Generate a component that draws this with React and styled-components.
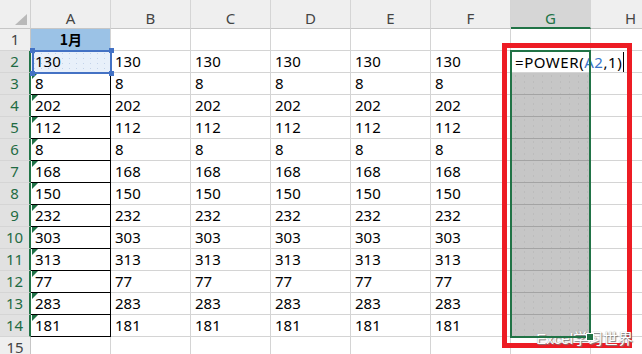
import React from "react";
import styled, { createGlobalStyle, css } from "styled-components";

const Global = createGlobalStyle`
  html, body { margin: 0; padding: 0; background: #fff; overflow: hidden; }
  body { width: 642px; height: 354px; }
`;

const gridTemplate = css`
  display: grid;
  grid-template-columns: 31px repeat(8, 80px);
  grid-template-rows: 29px repeat(15, 22px);
`;

/* Two layers stacked in one grid area: the cells, and the overlay marks above them */
const Stack = styled.div`
  display: grid;
  font-family: "Noto Sans", "Noto Sans CJK SC", sans-serif;
  font-size: 15px;
  color: #000;
  & > * { grid-area: 1 / 1; }
`;

const Sheet = styled.div`
  ${gridTemplate}
`;

const Overlay = styled.div`
  ${gridTemplate}
  pointer-events: none;
  z-index: 1;
`;

const Corner = styled.div`
  position: relative;
  background: #efefef;
  border-right: 1px solid #d0d0d0;
  border-bottom: 1px solid #c6c6c6;
  box-sizing: border-box;
  &::after {
    content: "";
    position: absolute;
    right: 3px;
    bottom: 3px;
    width: 0;
    height: 0;
    border-left: 12px solid transparent;
    border-bottom: 11px solid #b9b9b9;
  }
`;

const ColHeader = styled.div`
  box-sizing: border-box;
  text-align: center;
  padding-top: 8px;
  line-height: 21px;
  background: ${(p) => (p.$active ? "#d6d6d6" : "#efefef")};
  color: ${(p) => (p.$active ? "#217346" : "#444")};
  border-right: 1px solid #d5d5d5;
  border-bottom: ${(p) => (p.$active ? "2px solid #217346" : "1px solid #c6c6c6")};
`;

const RowHeader = styled.div`
  box-sizing: border-box;
  text-align: center;
  line-height: 21px;
  background: ${(p) => (p.$active ? "#e1e1e1" : "#efefef")};
  color: ${(p) => (p.$active ? "#1f6b43" : "#444")};
  border-right: ${(p) => (p.$active ? "2px solid #217346" : "1px solid #c6c6c6")};
  border-bottom: 1px solid #d5d5d5;
`;

const variants = {
  plain: css``,
  title: css`
    background: #9bc2e6;
    font-weight: 700;
    text-align: center;
    font-family: "Noto Sans CJK SC", "Noto Sans", sans-serif;
    font-size: 14px;
  `,
  boxed: css`
    border-right: 1px solid #000;
    border-bottom: 1px solid #000;
    &::before {
      content: "";
      position: absolute;
      left: 1px;
      top: 0;
      width: 0;
      height: 0;
      border-top: 6px solid #1e7145;
      border-right: 6px solid transparent;
    }
  `,
  ref: css`
    background-color: #e8f0fa;
    background-image: radial-gradient(#c3d3ea 0.7px, transparent 0.8px);
    background-size: 7px 5px;
    border-right: 1px solid #000;
    border-bottom: 1px solid #000;
  `,
  active: css`
    background: #fff;
  `,
  selected: css`
    background-color: #c6c6c6;
    background-image: radial-gradient(#b2b2b2 0.7px, transparent 0.8px);
    background-size: 9px 6px;
    border-bottom: 1px solid #a3a3a3;
  `,
};

const Cell = styled.div`
  position: relative;
  box-sizing: border-box;
  padding: 0 3px 0 4px;
  line-height: 21px;
  white-space: nowrap;
  background: #fff;
  border-right: 1px solid #d4d4d4;
  border-bottom: 1px solid #d4d4d4;
  ${(p) => variants[p.$variant || "plain"]}
`;

/* Overlay marks, placed on the same grid lines as the cells */
const RefBox = styled.div`
  grid-column: 2;
  grid-row: 3;
  position: relative;
  margin: -1px -1px -1px 1px;
  box-sizing: border-box;
  border: 2px solid #4472c4;
`;

const Handle = styled.span`
  position: absolute;
  width: 5px;
  height: 5px;
  background: #4472c4;
  ${(p) => (p.$top ? "top: -4px;" : "bottom: -4px;")}
  ${(p) => (p.$left ? "left: -4px;" : "right: -4px;")}
`;

const SelBox = styled.div`
  grid-column: 8;
  grid-row: 3 / 16;
  position: relative;
  margin: -1px 0 -1px -1px;
  box-sizing: border-box;
  border: 2px solid #217346;
`;

const FillHandle = styled.span`
  position: absolute;
  right: -4px;
  bottom: -4px;
  width: 6px;
  height: 6px;
  background: #217346;
  outline: 1px solid #fff;
`;

const EditBox = styled.div`
  grid-column: 8 / 10;
  grid-row: 3;
  justify-self: start;
  margin: 1px 0 1px 1px;
  padding: 0 2px 0 3px;
  background: #fff;
  line-height: 20px;
  white-space: nowrap;
  letter-spacing: 0.55px;
  display: flex;
  align-items: center;
`;

const RefText = styled.span`
  color: #3a74c8;
`;

const Caret = styled.span`
  width: 1px;
  height: 20px;
  margin-left: 1px;
  background: #000;
`;

const RedBox = styled.div`
  grid-column: 8 / 10;
  grid-row: 3 / 16;
  margin: -8px 39px -11px -9px;
  box-sizing: border-box;
  border: 5px solid #ed1c24;
`;

const Watermark = styled.div`
  grid-column: 8 / 10;
  grid-row: 15 / 17;
  align-self: end;
  justify-self: end;
  margin: 0 38px 11px 0;
  font-family: "Liberation Sans", "Noto Sans CJK SC", sans-serif;
  font-size: 15px;
  line-height: 18px;
  color: #fff;
  white-space: nowrap;
  text-shadow: 1px 1px 1px #7a7a7a, 0 0 1px #9a9a9a;
`;

const cols = ["A", "B", "C", "D", "E", "F", "G", "H"];
const values = [130, 8, 202, 112, 8, 168, 150, 232, 303, 313, 77, 283, 181];

export default function App() {
  const rows = [];
  for (let r = 1; r <= 15; r++) {
    const active = r >= 2 && r <= 14;
    rows.push(
      <RowHeader key={`h${r}`} $active={active}>
        {r}
      </RowHeader>
    );
    cols.forEach((c, ci) => {
      let variant = "plain";
      let content = null;
      if (r === 1 && c === "A") {
        variant = "title";
        content = "1月";
      } else if (active && ci <= 5) {
        content = values[r - 2];
        if (c === "A") variant = r === 2 ? "ref" : "boxed";
      } else if (c === "G" && r === 2) {
        variant = "active";
      } else if (c === "G" && active) {
        variant = "selected";
      }
      rows.push(
        <Cell key={`${c}${r}`} $variant={variant}>
          {content}
        </Cell>
      );
    });
  }

  return (
    <>
      <Global />
      <Stack>
        <Sheet>
          <Corner />
          {cols.map((c) => (
            <ColHeader key={c} $active={c === "G"}>
              {c}
            </ColHeader>
          ))}
          {rows}
        </Sheet>
        <Overlay>
          <RefBox>
            <Handle $top $left />
            <Handle $top />
            <Handle $left />
            <Handle />
          </RefBox>
          <SelBox>
            <FillHandle />
          </SelBox>
          <EditBox>
            =POWER(<RefText>A2</RefText>,1)
            <Caret />
          </EditBox>
          <RedBox />
          <Watermark>Excel学习世界</Watermark>
        </Overlay>
      </Stack>
    </>
  );
}
